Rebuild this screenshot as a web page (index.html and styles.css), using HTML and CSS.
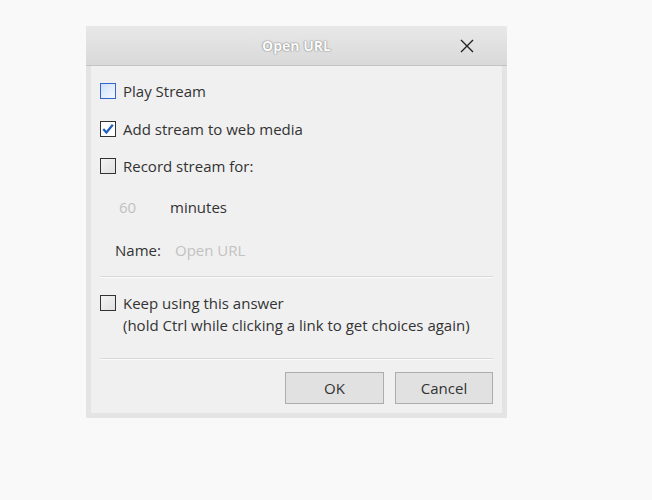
FILE: index.html
```html
<!DOCTYPE html>
<html>
<head>
<meta charset="utf-8">
<link rel="stylesheet" href="styles.css">
</head>
<body>
<div class="dialog">
  <div class="titlebar">
    <span></span>
    <span class="title">Open URL</span>
    <span class="close">
      <svg width="14" height="14" viewBox="0 0 14 14"><path d="M1 1 L13 13 M13 1 L1 13" stroke="#1e1e1e" stroke-width="1.3" fill="none"/></svg>
    </span>
  </div>
  <div class="body">
    <div class="row r1"><span class="cb cb-focus"></span><span>Play Stream</span></div>
    <div class="row r2"><span class="cb cb-checked"><svg width="14" height="14" viewBox="0 0 14 14"><path d="M2.3 7 L5.4 10.4 L11.8 2.8" stroke="#1f5fbf" stroke-width="2.3" fill="none"/></svg></span><span>Add stream to web media</span></div>
    <div class="row r3"><span class="cb"></span><span>Record stream for:</span></div>
    <div class="row r4"><span class="num">60</span><span class="unit">minutes</span></div>
    <div class="row r5"><span class="label">Name:</span><span class="placeholder">Open URL</span></div>
    <div class="sep s1"></div>
    <div class="keep">
      <span class="cb"></span>
      <div class="keep-text">
        <div>Keep using this answer</div>
        <div>(hold Ctrl while clicking a link to get choices again)</div>
      </div>
    </div>
    <div class="sep s2"></div>
    <div class="buttons">
      <div class="btn">OK</div>
      <div class="btn">Cancel</div>
    </div>
  </div>
</div>
</body>
</html>
```
FILE: styles.css
```css
html, body {
  margin: 0;
  padding: 0;
  background: #f9f9f9;
  width: 652px;
  height: 500px;
  overflow: hidden;
}
body {
  font-family: "Open Sans", "Noto Sans", sans-serif;
  font-size: 15px;
  color: #333;
}
.dialog {
  margin-left: 86px;
  margin-top: 26px;
  width: 421px;
}
.titlebar {
  height: 39px;
  border-bottom: 1px solid #c4c4c4;
  background: linear-gradient(#e8e8e8, #d9d9d9);
  display: grid;
  grid-template-columns: 1fr auto 1fr;
  align-items: center;
}
.title {
  font-weight: bold;
  font-size: 14px;
  color: #fbfbfb;
  text-shadow: 0 0 1px #8a8a8a, 0 0 1px #8a8a8a, 0 0 2px #aaaaaa;
}
.close {
  justify-self: end;
  margin-right: 33px;
  display: flex;
}
.body {
  background: #f0f0f0;
  border: 5px solid #e4e4e4;
  border-top: 0;
  padding: 14px 9px 9px 9px;
}
.row {
  height: 22px;
  display: flex;
  align-items: center;
  line-height: 22px;
}
.r2 { margin-top: 16px; }
.r3 { margin-top: 15px; }
.r4 { margin-top: 19px; }
.r5 { margin-top: 21px; }
.cb {
  width: 14px;
  height: 14px;
  border: 1px solid #333;
  background: linear-gradient(135deg, #f4f4f4, #e0e0e0);
  margin-right: 7px;
  flex: none;
  display: flex;
  align-items: center;
  justify-content: center;
}
.cb-focus {
  border-color: #3465cf;
  background: linear-gradient(135deg, #cfe0fa, #f6f9fe);
}
.cb-checked {
  background: #fff;
}
.num {
  color: #c0c0c0;
  margin-left: 19px;
  width: 51px;
}
.label {
  margin-left: 15px;
  width: 60px;
}
.placeholder {
  color: #c2c2c2;
}
.sep {
  border-top: 1px solid #d9d9d9;
  border-bottom: 1px solid #fbfbfb;
}
.s1 { margin-top: 15px; }
.keep {
  margin-top: 14px;
  display: flex;
  align-items: flex-start;
  line-height: 22px;
}
.keep .cb {
  margin-top: 3px;
}
.s2 { margin-top: 22px; }
.buttons {
  margin-top: 12px;
  display: flex;
  justify-content: flex-end;
  gap: 11px;
}
.btn {
  width: 97px;
  height: 30px;
  border: 1px solid #adadad;
  background: #e1e1e1;
  display: flex;
  align-items: center;
  justify-content: center;
  font-size: 15px;
}
.btn + .btn {
  width: 96px;
}
```
